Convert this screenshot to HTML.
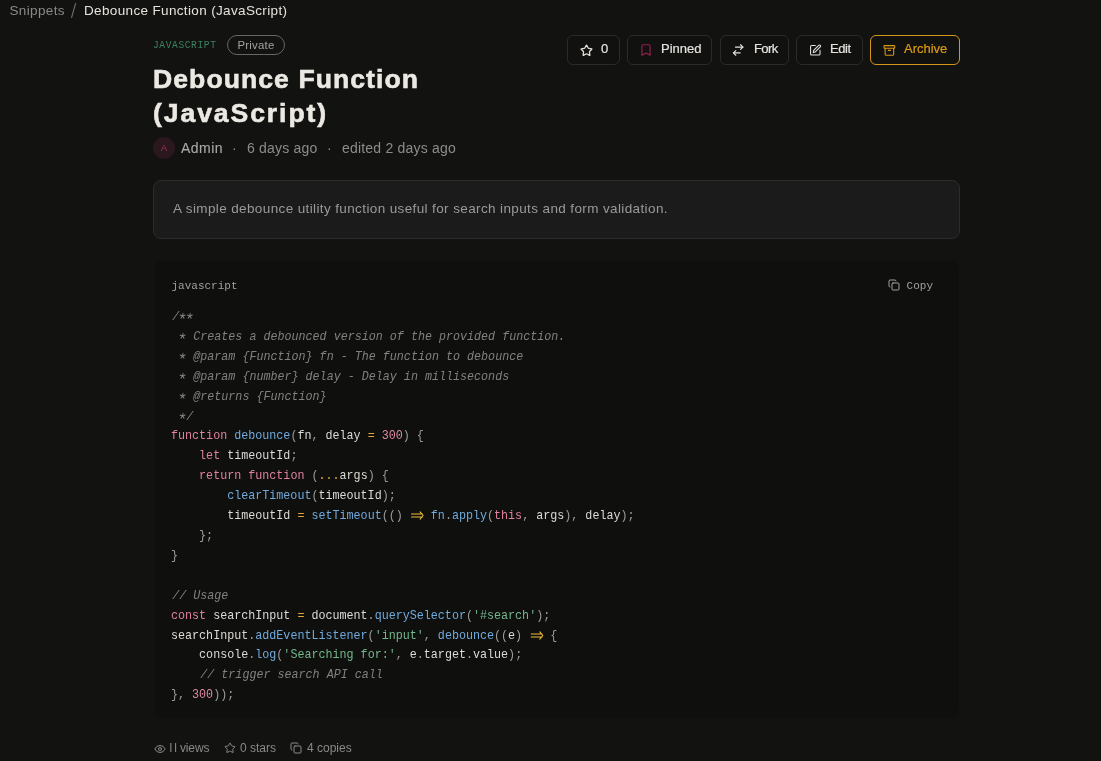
<!DOCTYPE html>
<html><head><meta charset="utf-8">
<style>
*{box-sizing:border-box;margin:0;padding:0}
html,body{width:1101px;height:761px;overflow:hidden;will-change:transform;background:#121211;font-family:"Liberation Sans",sans-serif;color:#e8e5df}
.abs{position:absolute;white-space:nowrap}
.crumb{top:1.8px;font-size:13.5px;line-height:18px;letter-spacing:0.35px;color:#8a8a8a}
.b2{color:#e6e3dd;letter-spacing:0.35px}
.lang{left:153px;top:37.5px;font-family:"Liberation Mono",monospace;font-size:11.5px;letter-spacing:0.75px;transform:scaleX(0.83);transform-origin:0 0;color:#3b8262;line-height:14px}
.badge{left:227px;top:35px;width:58px;height:20px;border:1px solid #666;border-radius:10px;font-size:11.4px;letter-spacing:0.25px;color:#a2a2a2;line-height:18.6px;text-align:center}
.title{left:153px;top:61.7px;font-size:26.6px;font-weight:bold;line-height:34px;color:#ece9e3;letter-spacing:1.05px;-webkit-text-stroke:0.6px #ece9e3}
.meta{top:137px;left:153px;height:22px;font-size:14px;color:#8c8c8c;line-height:22px;letter-spacing:0.2px}
.avatar{position:absolute;left:0;top:0;width:22px;height:22px;border-radius:50%;background:#2b181e;color:#a32a50;font-size:9.5px;text-align:center;line-height:22px}
.btn{position:absolute;top:35px;height:30px;border:1px solid #2c2b29;border-radius:6px;background:#111110;font-size:13px;color:#e6e3dd;line-height:28px;white-space:nowrap;-webkit-text-stroke:0.2px currentColor}
.btn svg{position:absolute;top:7px;width:14px;height:14px;fill:none;stroke:currentColor;stroke-width:2;stroke-linecap:round;stroke-linejoin:round}
.btn span{position:absolute;top:-0.8px}
.desc{left:153px;top:180px;width:807px;height:59px;background:#1b1b1b;border:1px solid #2c2c2b;border-radius:8px}
.desc p{position:absolute;left:19px;top:19px;font-size:13.5px;letter-spacing:0.38px;line-height:18px;color:#9a9a9a;white-space:nowrap}
.code{left:153px;top:260px;width:807px;height:459px;background:#0f0f0e;border-radius:8px;border:1px solid #121211}
.hdr{position:absolute;left:17.5px;top:18px;font-family:"Liberation Mono",monospace;font-size:11px;color:#a0a0a0;line-height:14px}
.copy{position:absolute;right:26px;top:18px;font-family:"Liberation Mono",monospace;font-size:11px;color:#a0a0a0;line-height:14px}
.copy svg{position:absolute;left:-18.2px;top:0.2px;width:12px;height:12px;fill:none;stroke:currentColor;stroke-width:2;stroke-linecap:round;stroke-linejoin:round}
pre{position:absolute;left:17px;top:46px;font-family:"Liberation Mono",monospace;font-size:13px;letter-spacing:0px;line-height:19.9px;color:#dedbd6;transform:scaleX(0.9);transform-origin:0 0}
.c{color:#828180;font-style:italic;position:relative;left:1.3px}
.ast{display:inline-block;vertical-align:0;overflow:visible;fill:none;stroke:#828180;stroke-width:1.05;stroke-linecap:round}
.k{color:#df829f}
.f{color:#70aadd}
.n{color:#e08aa5}
.o{color:#e2a83a}
.s{color:#72b78b}
.p{color:#9c9c9c}
.arr{display:inline-block;width:15.6px;height:9px;vertical-align:-1px;overflow:visible}
.stats{top:739px;left:153px;font-size:12px;color:#8a8a8a;line-height:18px}
.stats svg{fill:none;stroke:currentColor;stroke-width:2;stroke-linecap:round;stroke-linejoin:round}
</style></head><body>
<div class="abs crumb" style="left:9.5px">Snippets</div><svg style="position:absolute;left:70px;top:2px" width="8" height="17"><path d="M5.6 1.5L1.6 15.5" stroke="#6e6e6e" stroke-width="1.1" stroke-linecap="round"/></svg><div class="abs crumb b2" style="left:84px">Debounce Function (JavaScript)</div>

<div class="abs lang">JAVASCRIPT</div>
<div class="abs badge">Private</div>
<div class="abs title">Debounce Function<br><span style="letter-spacing:1.9px">(JavaScript)</span></div>
<div class="abs meta"><div class="avatar">A</div><span style="position:absolute;left:28px;color:#a8a8a8;-webkit-text-stroke:0.12px #a8a8a8;letter-spacing:0.45px">Admin</span><span style="position:absolute;left:232px;left:79px">·</span><span style="position:absolute;left:94px">6 days ago</span><span style="position:absolute;left:174px">·</span><span style="position:absolute;left:189px">edited 2 days ago</span></div>

<div class="btn" style="left:567px;width:53px"><svg style="left:11.8px;top:7.5px;width:13px;height:13px;stroke-width:2.3" viewBox="0 0 24 24"><path d="M11.525 2.295a.53.53 0 0 1 .95 0l2.31 4.679a2.123 2.123 0 0 0 1.595 1.16l5.166.756a.53.53 0 0 1 .294.904l-3.736 3.638a2.123 2.123 0 0 0-.611 1.878l.882 5.14a.53.53 0 0 1-.771.56l-4.618-2.428a2.122 2.122 0 0 0-1.973 0L6.396 21.01a.53.53 0 0 1-.77-.56l.881-5.139a2.122 2.122 0 0 0-.611-1.879L2.16 9.795a.53.53 0 0 1 .294-.906l5.165-.755a2.122 2.122 0 0 0 1.597-1.16z"/></svg><span style="left:33px">0</span></div>
<div class="btn" style="left:627px;width:85px"><svg style="left:11.3px;color:#951f50" viewBox="0 0 24 24"><path d="m19 21-7-4-7 4V5a2 2 0 0 1 2-2h10a2 2 0 0 1 2 2v16z"/></svg><span style="left:33px">Pinned</span></div>
<div class="btn" style="left:720px;width:69px"><svg style="left:10.4px" viewBox="0 0 24 24"><path d="m16.4 3 4 4-4 4"/><path d="M20.4 7H7.6"/><path d="m8.2 21-4-4 4-4"/><path d="M4.2 17h11.4"/></svg><span style="left:33px;letter-spacing:-0.6px">Fork</span></div>
<div class="btn" style="left:796px;width:67px"><svg style="left:12.3px;top:8px;width:12.6px;height:12.6px" viewBox="0 0 24 24"><path d="M12 3H5a2 2 0 0 0-2 2v14a2 2 0 0 0 2 2h14a2 2 0 0 0 2-2v-7"/><path d="M18.375 2.625a1 1 0 0 1 3 3l-9.013 9.014a2 2 0 0 1-.853.505l-2.873.84a.5.5 0 0 1-.62-.62l.84-2.873a2 2 0 0 1 .506-.852z"/></svg><span style="left:33px;letter-spacing:-0.4px">Edit</span></div>
<div class="btn" style="left:870px;width:90px;border-color:#d4961a;color:#da9a16"><svg style="left:12px;top:7.8px;width:12.8px;height:12.8px" viewBox="0 0 24 24"><rect width="20" height="5" x="2" y="3" rx="1"/><path d="M4 8v11a2 2 0 0 0 2 2h12a2 2 0 0 0 2-2V8"/><path d="M10 12h4"/></svg><span style="left:33px">Archive</span></div>

<div class="abs desc"><p>A simple debounce utility function useful for search inputs and form validation.</p></div>

<div class="abs code">
<div class="hdr">javascript</div>
<div class="copy"><svg viewBox="0 0 24 24"><rect width="14" height="14" x="8" y="8" rx="2" ry="2"/><path d="M4 16c-1.1 0-2-.9-2-2V4c0-1.1.9-2 2-2h10c1.1 0 2 .9 2 2"/></svg>Copy</div>
<pre><span class="c">/<svg class="ast" width="7.8" height="9" viewBox="0 0 7.8 9"><path d="M3.90 4.90L4.33 2.23M3.90 4.90L6.68 4.04M3.90 4.90L5.43 7.14M3.90 4.90L2.08 7.14M3.90 4.90L1.12 4.04"/></svg><svg class="ast" width="7.8" height="9" viewBox="0 0 7.8 9"><path d="M3.90 4.90L4.33 2.23M3.90 4.90L6.68 4.04M3.90 4.90L5.43 7.14M3.90 4.90L2.08 7.14M3.90 4.90L1.12 4.04"/></svg>
 <svg class="ast" width="7.8" height="9" viewBox="0 0 7.8 9"><path d="M3.90 4.90L4.33 2.23M3.90 4.90L6.68 4.04M3.90 4.90L5.43 7.14M3.90 4.90L2.08 7.14M3.90 4.90L1.12 4.04"/></svg> Creates a debounced version of the provided function.
 <svg class="ast" width="7.8" height="9" viewBox="0 0 7.8 9"><path d="M3.90 4.90L4.33 2.23M3.90 4.90L6.68 4.04M3.90 4.90L5.43 7.14M3.90 4.90L2.08 7.14M3.90 4.90L1.12 4.04"/></svg> @param {Function} fn - The function to debounce
 <svg class="ast" width="7.8" height="9" viewBox="0 0 7.8 9"><path d="M3.90 4.90L4.33 2.23M3.90 4.90L6.68 4.04M3.90 4.90L5.43 7.14M3.90 4.90L2.08 7.14M3.90 4.90L1.12 4.04"/></svg> @param {number} delay - Delay in milliseconds
 <svg class="ast" width="7.8" height="9" viewBox="0 0 7.8 9"><path d="M3.90 4.90L4.33 2.23M3.90 4.90L6.68 4.04M3.90 4.90L5.43 7.14M3.90 4.90L2.08 7.14M3.90 4.90L1.12 4.04"/></svg> @returns {Function}
 <svg class="ast" width="7.8" height="9" viewBox="0 0 7.8 9"><path d="M3.90 4.90L4.33 2.23M3.90 4.90L6.68 4.04M3.90 4.90L5.43 7.14M3.90 4.90L2.08 7.14M3.90 4.90L1.12 4.04"/></svg>/</span>
<span class="k">function</span> <span class="f">debounce</span><span class="p">(</span>fn<span class="p">,</span> delay <span class="o">=</span> <span class="n">300</span><span class="p">)</span> <span class="p">{</span>
    <span class="k">let</span> timeoutId<span class="p">;</span>
    <span class="k">return</span> <span class="k">function</span> <span class="p">(</span><span class="o">...</span>args<span class="p">)</span> <span class="p">{</span>
        <span class="f">clearTimeout</span><span class="p">(</span>timeoutId<span class="p">);</span>
        timeoutId <span class="o">=</span> <span class="f">setTimeout</span><span class="p">(()</span> <svg class="arr" width="15.6" height="9" viewBox="0 0 14 9" preserveAspectRatio="none"><path d="M2 3H12.8M2 6H12.8M10.6 0.8L13.6 4.5L10.6 8.2" fill="none" stroke="#efbd3a" stroke-width="1.05" stroke-linecap="round" stroke-linejoin="round"/></svg> <span class="f">fn</span><span class="p">.</span><span class="f">apply</span><span class="p">(</span><span class="k">this</span><span class="p">,</span> args<span class="p">),</span> delay<span class="p">);</span>
    <span class="p">};</span>
<span class="p">}</span>

<span class="c">// Usage</span>
<span class="k">const</span> searchInput <span class="o">=</span> document<span class="p">.</span><span class="f">querySelector</span><span class="p">(</span><span class="s">'#search'</span><span class="p">);</span>
searchInput<span class="p">.</span><span class="f">addEventListener</span><span class="p">(</span><span class="s">'input'</span><span class="p">,</span> <span class="f">debounce</span><span class="p">((</span>e<span class="p">)</span> <svg class="arr" width="15.6" height="9" viewBox="0 0 14 9" preserveAspectRatio="none"><path d="M2 3H12.8M2 6H12.8M10.6 0.8L13.6 4.5L10.6 8.2" fill="none" stroke="#efbd3a" stroke-width="1.05" stroke-linecap="round" stroke-linejoin="round"/></svg> <span class="p">{</span>
    console<span class="p">.</span><span class="f">log</span><span class="p">(</span><span class="s">'Searching for:'</span><span class="p">,</span> e<span class="p">.</span>target<span class="p">.</span>value<span class="p">);</span>
    <span class="c">// trigger search API call</span>
<span class="p">},</span> <span class="n">300</span><span class="p">));</span></pre>
</div>

<div class="abs stats">
<svg style="position:absolute;left:0.5px;top:3.5px" width="12" height="12" viewBox="0 0 24 24"><path d="M2.062 12.348a1 1 0 0 1 0-.696 10.75 10.75 0 0 1 19.876 0 1 1 0 0 1 0 .696 10.75 10.75 0 0 1-19.876 0"/><circle cx="12" cy="12" r="3"/></svg><span style="position:absolute;left:16.5px;letter-spacing:2.2px">ll</span><span style="position:absolute;left:27px;letter-spacing:-0.15px">views</span>
<svg style="position:absolute;left:71px;top:3px" width="12" height="12" viewBox="0 0 24 24"><path d="M11.525 2.295a.53.53 0 0 1 .95 0l2.31 4.679a2.123 2.123 0 0 0 1.595 1.16l5.166.756a.53.53 0 0 1 .294.904l-3.736 3.638a2.123 2.123 0 0 0-.611 1.878l.882 5.14a.53.53 0 0 1-.771.56l-4.618-2.428a2.122 2.122 0 0 0-1.973 0L6.396 21.01a.53.53 0 0 1-.77-.56l.881-5.139a2.122 2.122 0 0 0-.611-1.879L2.16 9.795a.53.53 0 0 1 .294-.906l5.165-.755a2.122 2.122 0 0 0 1.597-1.16z"/></svg><span style="position:absolute;left:87px">0 stars</span>
<svg style="position:absolute;left:137px;top:3px" width="12" height="12" viewBox="0 0 24 24"><rect width="14" height="14" x="8" y="8" rx="2" ry="2"/><path d="M4 16c-1.1 0-2-.9-2-2V4c0-1.1.9-2 2-2h10c1.1 0 2 .9 2 2"/></svg><span style="position:absolute;left:154px">4 copies</span>
</div>
</body></html>
